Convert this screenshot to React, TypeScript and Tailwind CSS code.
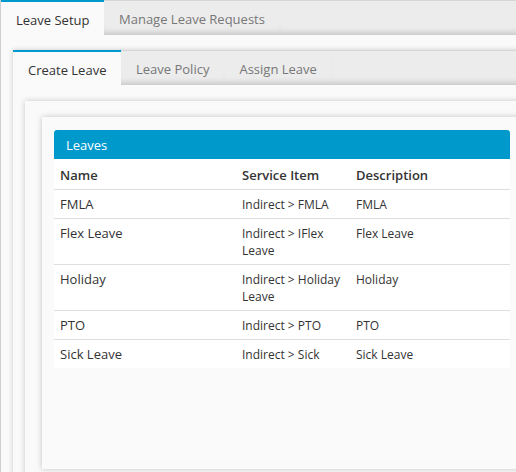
import React from "react";

const rows = [
  { name: "FMLA", item: "Indirect > FMLA", desc: "FMLA" },
  { name: "Flex Leave", item: "Indirect > IFlex Leave", desc: "Flex Leave" },
  { name: "Holiday", item: "Indirect > Holiday Leave", desc: "Holiday" },
  { name: "PTO", item: "Indirect > PTO", desc: "PTO" },
  { name: "Sick Leave", item: "Indirect > Sick", desc: "Sick Leave" },
];

function TabBar({ active, tabs, activeWidth }: { active: string; tabs: string[]; activeWidth: string }) {
  return (
    <div className="flex h-[35px] shrink-0">
      {tabs.map((t) =>
        t === active ? (
          <div
            key={t}
            className={`${activeWidth} shrink-0 border-t-2 border-[#0099cc] bg-[#fafafa] pl-[15px] pt-[9px] text-[13px] text-[#333]`}
          >
            {t}
          </div>
        ) : (
          <div
            key={t}
            className="shrink-0 border-t border-[#d6d6d6] bg-[#ececec] px-[15px] pt-[9px] text-[13px] text-[#777] shadow-[inset_0_-7px_6px_-5px_rgba(0,0,0,0.18)]"
          >
            {t}
          </div>
        )
      )}
      <div className="flex-1 border-t border-[#d6d6d6] bg-[#ececec] shadow-[inset_0_-7px_6px_-5px_rgba(0,0,0,0.18)]" />
    </div>
  );
}

export default function App() {
  return (
    <div
      className="h-[472px] w-[516px] overflow-hidden border-l border-[#cfcfcf] bg-[#fafafa]"
      style={{ fontFamily: '"Open Sans", "Liberation Sans", sans-serif' }}
    >
      <div className="flex w-[700px] flex-col">
        <TabBar active="Leave Setup" tabs={["Leave Setup", "Manage Leave Requests"]} activeWidth="w-[103px]" />

        {/* Outer tab content */}
        <div className="pl-[12px] pt-[15px]">
          <div className="flex h-[500px] flex-col bg-[#fafafa] shadow-[0_0_5px_rgba(0,0,0,0.2)]">
            <TabBar active="Create Leave" tabs={["Create Leave", "Leave Policy", "Assign Leave"]} activeWidth="w-[108px]" />

            <div className="pl-[12px] pt-[16px]">
              <div className="h-[420px] bg-[#fafafa] pl-[17px] pt-[16px] shadow-[0_0_6px_rgba(0,0,0,0.2)]">
                <div className="h-[352px] bg-[#fafafa] pl-[12px] pt-[13px] shadow-[0_0_6px_rgba(0,0,0,0.22)]">
                  <div className="w-[456px] bg-white">
                    <div className="h-[29px] rounded-t-[3px] bg-[#0099cc] pl-[12px] pt-[6px] text-[13px] text-white">
                      Leaves
                    </div>
                    <table className="w-full table-fixed border-collapse text-left text-[#333]">
                      <colgroup>
                        <col className="w-[182px]" />
                        <col className="w-[114px]" />
                        <col />
                      </colgroup>
                      <thead>
                        <tr className="h-[30px] text-[13px] font-semibold">
                          <th className="px-[6px] pt-[3px] align-middle font-semibold">Name</th>
                          <th className="px-[6px] pt-[3px] align-middle font-semibold">Service Item</th>
                          <th className="px-[6px] pt-[3px] align-middle font-semibold">Description</th>
                        </tr>
                      </thead>
                      <tbody>
                        {rows.map((r) => (
                          <tr key={r.name} className="border-t border-[#dedede] align-top">
                            <td className="px-[6px] pb-[5px] pt-[5px] text-[13px] leading-[18px]">{r.name}</td>
                            <td className="px-[6px] pb-[5px] pt-[6px] text-[12px] leading-[17px]">{r.item}</td>
                            <td className="px-[6px] pb-[5px] pt-[6px] text-[12px] leading-[17px]">{r.desc}</td>
                          </tr>
                        ))}
                      </tbody>
                    </table>
                  </div>
                </div>
              </div>
            </div>
          </div>
        </div>
      </div>
    </div>
  );
}
